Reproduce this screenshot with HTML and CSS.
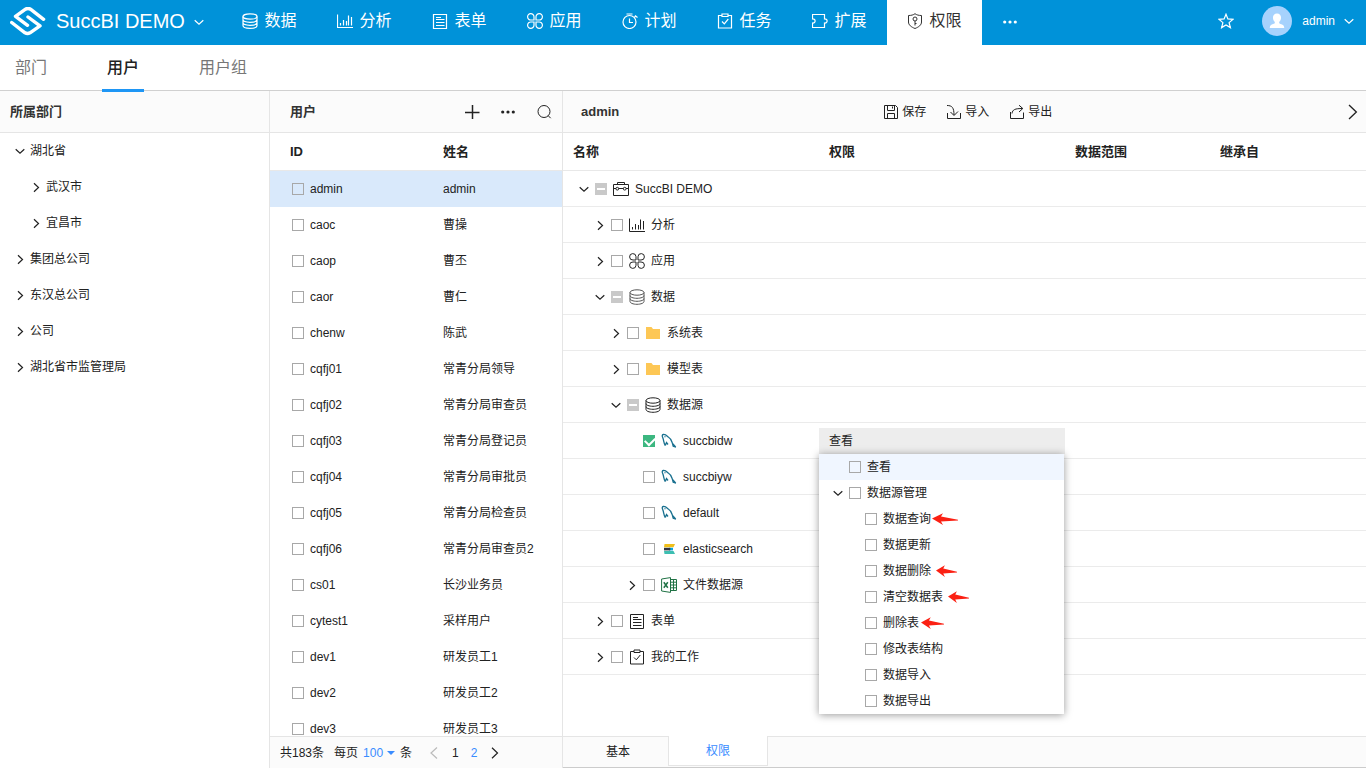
FILE: index.html
```html
<!DOCTYPE html>
<html lang="zh-CN">
<head>
<meta charset="utf-8">
<meta name="viewport" content="width=device-width, initial-scale=1">
<title>SuccBI DEMO</title>
<link rel="stylesheet" href="styles.css">
</head>
<body>
<svg class="sprite" aria-hidden="true">
  <symbol id="i-db" viewBox="0 0 16 16"><ellipse cx="8" cy="3.5" rx="7" ry="2.7"/><path d="M1 3.5v9c0 1.5 3 2.8 7 2.8s7-1.3 7-2.8v-9M1 6.6c0 1.5 3 2.7 7 2.7s7-1.2 7-2.7M1 9.6c0 1.5 3 2.7 7 2.7s7-1.2 7-2.7"/></symbol>
  <symbol id="i-chart" viewBox="0 0 16 16"><path d="M.5 1.500v13H16M3.500 12.500V10M6.500 12.500V7M9.500 12.500V8M11.500 12.500V2.500M14.500 12.500V4"/></symbol>
  <symbol id="i-form" viewBox="0 0 16 16"><path d="M1.500 1.500h13v14h-13zM4 4.500h5M4 6.500h8.500M4 9.500h8.500M4 12.500h8.500"/></symbol>
  <symbol id="i-app" viewBox="0 0 16 16"><path d="M7 7H4A3.200 3.200 0 1 1 7 3.700zM9 7H12A3.200 3.200 0 1 0 9 3.700zM7 9H4A3.200 3.200 0 1 0 7 12.300zM9 9H12A3.200 3.200 0 1 1 9 12.300z"/></symbol>
  <symbol id="i-plan" viewBox="0 0 16 16"><circle cx="7.500" cy="9" r="6.500"/><path d="M4.500 1h6M7.500 5.500v4H11M12.300 4.500l1.500-1.500M13 2.500l2.500 2"/></symbol>
  <symbol id="i-task" viewBox="0 0 16 16"><path d="M5 2.500H1.500v12.500h13V2.500H11M5 1h6v2.500H5zM5 8.500l2.300 2.300L11.300 6"/></symbol>
  <symbol id="i-ext" viewBox="0 0 16 16"><path d="M.5 6V1.500h12V6c3.500-.5 3.500 4.500 0 4v4.500H.5V10c3.500 .5 3.500-4.500 0-4z"/></symbol>
  <symbol id="i-shield" viewBox="0 0 16 16"><path d="M8 .7C6.500 2 4 2.500 1.500 2.500v6.500c0 3 2.700 5 6.500 6.500 3.800-1.500 6.500-3.500 6.500-6.500V2.500C12 2.500 9.500 2 8 .7z"/><circle cx="8" cy="6" r="2"/><path d="M8 8v4.500M8 10.500h1.500"/></symbol>
  <symbol id="i-down" viewBox="0 0 12 12"><path d="M1.700 4.200 6 8.200 10.300 4.200"/></symbol>
  <symbol id="i-right" viewBox="0 0 12 12"><path d="M4 2.200 8.500 6.500 4 10.800"/></symbol>
  <symbol id="i-left" viewBox="0 0 12 12"><path d="M9 .5 3 6l6 5.500"/></symbol>
  <symbol id="i-next" viewBox="0 0 12 12"><path d="M3 .8 8.500 6l-5.500 5.200"/></symbol>
  <symbol id="i-more" viewBox="0 0 16 16"><g fill="currentColor" stroke="none"><circle cx="2.700" cy="8" r="1.600"/><circle cx="8" cy="8" r="1.600"/><circle cx="13.300" cy="8" r="1.600"/></g></symbol>
  <symbol id="i-star" viewBox="0 0 16 16"><path d="m8 1.200 1.900 4.700 5.200.4-4 3.300 1.300 5L8 11.900l-4.400 2.700 1.300-5-4-3.300 5.200-.4z"/></symbol>
  <symbol id="i-plus" viewBox="0 0 16 16"><path d="M8.500 1v14M1 8.500h14.500"/></symbol>
  <symbol id="i-search" viewBox="0 0 16 16"><circle cx="8" cy="7.500" r="6"/><path d="m12.200 11.700 2.500 2.500"/></symbol>
  <symbol id="i-save" viewBox="0 0 16 16"><path d="M1.500 1.500h11l2 2v11h-13zM4.500 1.500v5h7v-5M4.500 14.500v-5h7v5M9.500 2.500v2"/></symbol>
  <symbol id="i-import" viewBox="0 0 16 16"><path d="M1 1.500c5 0 7 2 7 9.500M4.500 8 8 11.500 12 7.500M1.500 9v5.500h13V9"/></symbol>
  <symbol id="i-export" viewBox="0 0 16 16"><path d="M1.500 8v6.500h13V8.500M3 9.500c.5-4 3-5 10.500-5M10 1.200l3.800 3.300L10 8"/></symbol>
  <symbol id="i-case" viewBox="0 0 16 16"><path d="M.5 3.500h15v11H.5zM4.500 3.500v-2h7v2M.5 7.500h2.500M5.500 7.500h5M13 7.500h2.500"/><circle cx="4.300" cy="7.700" r="1.400"/><circle cx="11.700" cy="7.700" r="1.400"/></symbol>
  <symbol id="i-folder" viewBox="0 0 16 16"><path fill="#fdc755" stroke="none" d="M1 2h5.500l1.500 2h7v10H1z"/></symbol>
  <symbol id="i-mysql" viewBox="0 0 16 16"><g stroke="#19708f" stroke-width="1.300"><path d="M4.300 12.500C2.500 10 3 7.500 1.700 4.500 1 3 1 1.800 2.300 1.500c2-.3 3.500 1.200 5 2.500C10 5.500 10.500 8 11.500 10.500c1 1.200 2 1.700 3 3.300M4.300 12.500l1.200-3 1.500 2M11.500 10.500l.7 2.800 2.800.8"/><path d="M4 3.200v1"/></g></symbol>
  <symbol id="i-elastic" viewBox="0 0 16 16"><g stroke="none"><path fill="#f0bf1a" d="M3.500 3H14l-1.500 3.200H3z"/><path fill="#07a5de" d="M8 6.800h4v2.600H8z"/><path fill="#30323f" d="M3 6.800h6.300v2.600H3z"/><path fill="#3dbeb1" d="M3 10h9.500L14 13H3.500z"/></g></symbol>
  <symbol id="i-excel" viewBox="0 0 16 16"><g stroke="#207245"><path d="M.6 2 9.500.6v14.800L.6 14zM9.500 2.500h6v11h-6M12.500 2.500v11M9.500 5.200h6M9.500 8h6M9.500 10.800h6"/><path stroke-width="1.500" d="m2.800 5.200 4 5.600M6.800 5.200l-4 5.600"/></g></symbol>
  <symbol id="i-arrow" viewBox="0 0 26 12" preserveAspectRatio="none"><path fill="#fb2013" stroke="none" d="M0 5.500 11 .2 9 3.600 26 6.800v.8L9 8.400l2 3.500z"/></symbol>
</svg>

<header class="topbar">
  <button class="brand" type="button">
    <svg class="brand__logo" viewBox="0 0 36 29" aria-hidden="true"><path d="M33.600 12.300 20.500 2.200q-2.500-1.500-5 0L5.500 9.300 17.500 18.300M1.700 15.500 15 25.800q2.500 1.500 5 0L30 18.800 18 10"/></svg>
    <span class="brand__name">SuccBI DEMO</span>
    <svg class="icon icon--sm"><use href="#i-down"/></svg>
  </button>
  <nav class="nav">
    <a class="nav__item" href="#"><svg class="icon"><use href="#i-db"/></svg>数据</a>
    <a class="nav__item" href="#"><svg class="icon"><use href="#i-chart"/></svg>分析</a>
    <a class="nav__item" href="#"><svg class="icon"><use href="#i-form"/></svg>表单</a>
    <a class="nav__item" href="#"><svg class="icon"><use href="#i-app"/></svg>应用</a>
    <a class="nav__item" href="#"><svg class="icon"><use href="#i-plan"/></svg>计划</a>
    <a class="nav__item" href="#"><svg class="icon"><use href="#i-task"/></svg>任务</a>
    <a class="nav__item" href="#"><svg class="icon"><use href="#i-ext"/></svg>扩展</a>
    <a class="nav__item nav__item--active" href="#"><svg class="icon"><use href="#i-shield"/></svg>权限</a>
    <button class="nav__more" type="button" aria-label="更多"><svg class="icon"><use href="#i-more"/></svg></button>
  </nav>
  <div class="account">
    <button class="star" type="button" aria-label="收藏"><svg class="icon"><use href="#i-star"/></svg></button>
    <button class="account__user" type="button">
      <svg class="avatar" viewBox="0 0 30 30" aria-hidden="true"><circle cx="15" cy="15" r="15" fill="#a6d2fd"/><path fill="#fff" d="M15 7.500c2.800 0 4.300 2 4 4.700-.2 1.800-1 3-1.800 3.800v1.300c1 1 5 1 5 4.200v.5H7.800v-.5c0-3.200 4-3.200 5-4.200V16c-.8-.8-1.600-2-1.800-3.800-.3-2.700 1.200-4.700 4-4.700z"/></svg>
      <span>admin</span>
      <svg class="icon icon--sm"><use href="#i-down"/></svg>
    </button>
  </div>
</header>

<nav class="subtabs">
  <a class="subtabs__item" href="#">部门</a>
  <a class="subtabs__item subtabs__item--active" href="#">用户</a>
  <a class="subtabs__item" href="#">用户组</a>
</nav>

<main class="workspace">
  <section class="panel panel--dept">
    <h2 class="panel__head">所属部门</h2>
    <ul class="depts">
      <li class="depts__row"><svg class="icon icon--sm"><use href="#i-down"/></svg>湖北省</li>
      <li class="depts__row depts__row--child"><svg class="icon icon--sm"><use href="#i-right"/></svg>武汉市</li>
      <li class="depts__row depts__row--child"><svg class="icon icon--sm"><use href="#i-right"/></svg>宜昌市</li>
      <li class="depts__row"><svg class="icon icon--sm"><use href="#i-right"/></svg>集团总公司</li>
      <li class="depts__row"><svg class="icon icon--sm"><use href="#i-right"/></svg>东汉总公司</li>
      <li class="depts__row"><svg class="icon icon--sm"><use href="#i-right"/></svg>公司</li>
      <li class="depts__row"><svg class="icon icon--sm"><use href="#i-right"/></svg>湖北省市监管理局</li>
    </ul>
  </section>

  <section class="panel panel--users">
    <div class="panel__head">
      <h2 class="panel__title">用户</h2>
      <div class="tools">
        <button type="button" aria-label="新增"><svg class="icon icon--bold"><use href="#i-plus"/></svg></button>
        <button type="button" aria-label="更多"><svg class="icon"><use href="#i-more"/></svg></button>
        <button type="button" aria-label="搜索"><svg class="icon"><use href="#i-search"/></svg></button>
      </div>
    </div>
    <div class="panel__body">
      <table class="grid grid--users">
        <colgroup><col class="col-id"><col></colgroup>
        <thead><tr><th>ID</th><th>姓名</th></tr></thead>
        <tbody>
          <tr class="is-selected"><td><label class="pick"><input class="check" type="checkbox">admin</label></td><td>admin</td></tr>
          <tr><td><label class="pick"><input class="check" type="checkbox">caoc</label></td><td>曹操</td></tr>
          <tr><td><label class="pick"><input class="check" type="checkbox">caop</label></td><td>曹丕</td></tr>
          <tr><td><label class="pick"><input class="check" type="checkbox">caor</label></td><td>曹仁</td></tr>
          <tr><td><label class="pick"><input class="check" type="checkbox">chenw</label></td><td>陈武</td></tr>
          <tr><td><label class="pick"><input class="check" type="checkbox">cqfj01</label></td><td>常青分局领导</td></tr>
          <tr><td><label class="pick"><input class="check" type="checkbox">cqfj02</label></td><td>常青分局审查员</td></tr>
          <tr><td><label class="pick"><input class="check" type="checkbox">cqfj03</label></td><td>常青分局登记员</td></tr>
          <tr><td><label class="pick"><input class="check" type="checkbox">cqfj04</label></td><td>常青分局审批员</td></tr>
          <tr><td><label class="pick"><input class="check" type="checkbox">cqfj05</label></td><td>常青分局检查员</td></tr>
          <tr><td><label class="pick"><input class="check" type="checkbox">cqfj06</label></td><td>常青分局审查员2</td></tr>
          <tr><td><label class="pick"><input class="check" type="checkbox">cs01</label></td><td>长沙业务员</td></tr>
          <tr><td><label class="pick"><input class="check" type="checkbox">cytest1</label></td><td>采样用户</td></tr>
          <tr><td><label class="pick"><input class="check" type="checkbox">dev1</label></td><td>研发员工1</td></tr>
          <tr><td><label class="pick"><input class="check" type="checkbox">dev2</label></td><td>研发员工2</td></tr>
          <tr><td><label class="pick"><input class="check" type="checkbox">dev3</label></td><td>研发员工3</td></tr>
        </tbody>
      </table>
    </div>
    <footer class="pager">
      <span>共183条</span>
      <label class="pager__size">每页
        <span class="pager__select"><select><option>100</option></select><i class="caret"></i></span>
        条</label>
      <div class="pager__pages">
        <button class="is-disabled" type="button" aria-label="上一页"><svg class="icon icon--sm"><use href="#i-left"/></svg></button>
        <button type="button">1</button>
        <button class="is-link" type="button">2</button>
        <button type="button" aria-label="下一页"><svg class="icon icon--sm"><use href="#i-next"/></svg></button>
      </div>
    </footer>
  </section>

  <section class="panel panel--rights">
    <div class="panel__head">
      <h2 class="panel__title">admin</h2>
      <div class="actions">
        <button type="button"><svg class="icon"><use href="#i-save"/></svg>保存</button>
        <button type="button"><svg class="icon"><use href="#i-import"/></svg>导入</button>
        <button type="button"><svg class="icon"><use href="#i-export"/></svg>导出</button>
      </div>
      <button class="expand" type="button" aria-label="展开"><svg class="icon"><use href="#i-next"/></svg></button>
    </div>
    <div class="panel__body">
      <table class="grid grid--rights">
        <colgroup><col class="col-name"><col class="col-right"><col class="col-range"><col></colgroup>
        <thead><tr><th>名称</th><th>权限</th><th>数据范围</th><th>继承自</th></tr></thead>
        <tbody>
          <tr><td><div class="node"><svg class="icon icon--sm"><use href="#i-down"/></svg><label><input class="check check--partial" type="checkbox"><svg class="icon"><use href="#i-case"/></svg>SuccBI DEMO</label></div></td><td></td><td></td><td></td></tr>
          <tr><td><div class="node node--l1"><svg class="icon icon--sm"><use href="#i-right"/></svg><label><input class="check" type="checkbox"><svg class="icon"><use href="#i-chart"/></svg>分析</label></div></td><td></td><td></td><td></td></tr>
          <tr><td><div class="node node--l1"><svg class="icon icon--sm"><use href="#i-right"/></svg><label><input class="check" type="checkbox"><svg class="icon"><use href="#i-app"/></svg>应用</label></div></td><td></td><td></td><td></td></tr>
          <tr><td><div class="node node--l1"><svg class="icon icon--sm"><use href="#i-down"/></svg><label><input class="check check--partial" type="checkbox"><svg class="icon icon--soft"><use href="#i-db"/></svg>数据</label></div></td><td></td><td></td><td></td></tr>
          <tr><td><div class="node node--l2"><svg class="icon icon--sm"><use href="#i-right"/></svg><label><input class="check" type="checkbox"><svg class="icon"><use href="#i-folder"/></svg>系统表</label></div></td><td></td><td></td><td></td></tr>
          <tr><td><div class="node node--l2"><svg class="icon icon--sm"><use href="#i-right"/></svg><label><input class="check" type="checkbox"><svg class="icon"><use href="#i-folder"/></svg>模型表</label></div></td><td></td><td></td><td></td></tr>
          <tr><td><div class="node node--l2"><svg class="icon icon--sm"><use href="#i-down"/></svg><label><input class="check check--partial" type="checkbox"><svg class="icon"><use href="#i-db"/></svg>数据源</label></div></td><td></td><td></td><td></td></tr>
          <tr><td><div class="node node--l3 node--leaf"><label><input class="check" type="checkbox" checked><svg class="icon"><use href="#i-mysql"/></svg>succbidw</label></div></td>
            <td class="cell-combo">
              <div class="combo">
                <button class="combo__value" type="button" aria-haspopup="true" aria-expanded="true">查看</button>
                <ul class="menu">
                  <li class="menu__item is-hover"><label><input class="check" type="checkbox">查看</label></li>
                  <li class="menu__item menu__item--open"><svg class="icon icon--sm"><use href="#i-down"/></svg><label><input class="check" type="checkbox">数据源管理</label></li>
                  <li class="menu__item menu__item--child"><label><input class="check" type="checkbox">数据查询</label><svg class="mark mark--long"><use href="#i-arrow"/></svg></li>
                  <li class="menu__item menu__item--child"><label><input class="check" type="checkbox">数据更新</label></li>
                  <li class="menu__item menu__item--child"><label><input class="check" type="checkbox">数据删除</label><svg class="mark mark--apart"><use href="#i-arrow"/></svg></li>
                  <li class="menu__item menu__item--child"><label><input class="check" type="checkbox">清空数据表</label><svg class="mark mark--apart"><use href="#i-arrow"/></svg></li>
                  <li class="menu__item menu__item--child"><label><input class="check" type="checkbox">删除表</label><svg class="mark"><use href="#i-arrow"/></svg></li>
                  <li class="menu__item menu__item--child"><label><input class="check" type="checkbox">修改表结构</label></li>
                  <li class="menu__item menu__item--child"><label><input class="check" type="checkbox">数据导入</label></li>
                  <li class="menu__item menu__item--child"><label><input class="check" type="checkbox">数据导出</label></li>
                </ul>
              </div>
            </td><td></td><td></td></tr>
          <tr><td><div class="node node--l3 node--leaf"><label><input class="check" type="checkbox"><svg class="icon"><use href="#i-mysql"/></svg>succbiyw</label></div></td><td></td><td></td><td></td></tr>
          <tr><td><div class="node node--l3 node--leaf"><label><input class="check" type="checkbox"><svg class="icon"><use href="#i-mysql"/></svg>default</label></div></td><td></td><td></td><td></td></tr>
          <tr><td><div class="node node--l3 node--leaf"><label><input class="check" type="checkbox"><svg class="icon"><use href="#i-elastic"/></svg>elasticsearch</label></div></td><td></td><td></td><td></td></tr>
          <tr><td><div class="node node--l3"><svg class="icon icon--sm"><use href="#i-right"/></svg><label><input class="check" type="checkbox"><svg class="icon"><use href="#i-excel"/></svg>文件数据源</label></div></td><td></td><td></td><td></td></tr>
          <tr><td><div class="node node--l1"><svg class="icon icon--sm"><use href="#i-right"/></svg><label><input class="check" type="checkbox"><svg class="icon"><use href="#i-form"/></svg>表单</label></div></td><td></td><td></td><td></td></tr>
          <tr><td><div class="node node--l1"><svg class="icon icon--sm"><use href="#i-right"/></svg><label><input class="check" type="checkbox"><svg class="icon"><use href="#i-task"/></svg>我的工作</label></div></td><td></td><td></td><td></td></tr>
        </tbody>
      </table>
    </div>
    <div class="sheets">
      <button class="sheets__tab" type="button">基本</button>
      <button class="sheets__tab sheets__tab--active" type="button">权限</button>
      <div class="sheets__rest"></div>
    </div>
  </section>
</main>
</body>
</html>
```
FILE: styles.css
```css
* { box-sizing: border-box; }

body {
  margin: 0;
  height: 100vh;
  display: flex;
  flex-direction: column;
  overflow: hidden;
  background: #fff;
  color: #222;
  font: 12px/16px "Liberation Sans", "Noto Sans CJK SC", sans-serif;
}

button, select {
  margin: 0;
  padding: 0;
  border: 0;
  background: none;
  color: inherit;
  font: inherit;
}

a { color: inherit; text-decoration: none; }
ul { margin: 0; padding: 0; list-style: none; }
h2 { margin: 0; font-size: 13px; font-weight: 600; }

.sprite { position: absolute; width: 0; height: 0; }

.icon {
  flex: none;
  width: 16px;
  height: 16px;
  fill: none;
  stroke: currentColor;
  stroke-width: 1;
}
.icon--sm { width: 12px; height: 12px; stroke-width: 1.2; }
.icon--bold { stroke-width: 1.5; }
.icon--soft { color: #555; }

/* Top bar */
.topbar {
  flex: none;
  display: flex;
  height: 45px;
  background: #0092d9;
  color: #fff;
}
.brand {
  display: flex;
  align-items: center;
  width: 222px;
  padding: 0 0 2px 10px;
  font-size: 20px;
  line-height: 24px;
}
.brand__logo {
  width: 36px;
  height: 29px;
  margin-right: 10px;
  fill: none;
  stroke: #fff;
  stroke-width: 3.4;
  stroke-linecap: round;
  stroke-linejoin: round;
}
.brand__name { padding-bottom: 2px; }
.brand .icon { margin-left: 8px; }
.nav { display: flex; }
.nav__item {
  display: flex;
  align-items: center;
  justify-content: center;
  gap: 6px;
  width: 95px;
  padding-bottom: 4px;
  font-size: 16px;
  line-height: 20px;
}
.nav__item .icon { stroke-width: 1.2; }
.nav__item--active { background: #fff; color: #333; }
.nav__item--active .icon { stroke-width: 1; }
.nav__more { width: 56px; padding-top: 2px; }
.account {
  display: flex;
  align-items: center;
  margin-left: auto;
  padding: 0 11px 4px 0;
}
.star { height: 16px; margin-right: 28px; }
.star .icon { stroke-width: 1.2; }
.account__user { display: flex; align-items: center; }
.avatar { width: 30px; height: 30px; margin-right: 10px; }
.account__user .icon { margin-left: 8px; }

/* Section tabs */
.subtabs {
  position: relative;
  flex: none;
  display: flex;
  gap: 50px;
  height: 46px;
  padding-left: 10px;
  border-bottom: 1px solid #d0d0d0;
  color: #777;
  font-size: 16px;
}
.subtabs__item {
  height: 47px;
  padding: 0 5px;
  line-height: 46px;
}
.subtabs__item--active {
  border-bottom: 3px solid #1e96f5;
  color: #222;
  font-weight: 500;
}

/* Panels */
.workspace { flex: 1; display: flex; min-height: 0; }
.panel { display: flex; flex-direction: column; min-width: 0; }
.panel--dept { flex: none; width: 270px; border-right: 1px solid #e5e5e5; }
.panel--users { flex: none; width: 293px; border-right: 1px solid #e5e5e5; }
.panel--rights { flex: 1; }
.panel__head {
  flex: none;
  display: flex;
  align-items: center;
  height: 42px;
  border-bottom: 1px solid #e5e5e5;
  background: #fbfbfb;
  color: #333;
}
.panel--dept .panel__head { padding-left: 10px; }
.panel--users .panel__head { padding: 0 10px 0 20px; }
.panel--rights .panel__head { padding: 0 5px 0 18px; }
.panel__body { flex: 1; min-height: 0; overflow: hidden; }

.depts__row {
  display: flex;
  align-items: center;
  gap: 4px;
  height: 36px;
  padding-left: 14px;
}
.depts__row--child { padding-left: 30px; }

.tools { display: flex; gap: 20px; margin-left: auto; color: #222; }
.tools button { height: 16px; }

.actions { display: flex; gap: 20px; margin-left: 264px; color: #222; }
.actions button { display: flex; align-items: center; gap: 3px; }
.expand { height: 16px; margin-left: auto; color: #222; }

/* Tables */
.grid {
  width: 100%;
  table-layout: fixed;
  border-collapse: separate;
  border-spacing: 0;
}
.grid th {
  height: 38px;
  padding: 0 0 0 10px;
  border-bottom: 1px solid #e8e8e8;
  font-size: 13px;
  font-weight: 600;
  text-align: left;
}
.grid td { height: 36px; padding: 0 0 0 10px; }
.grid--users th:first-child { padding-left: 20px; }
.grid--users td:first-child { padding-left: 22px; }
.grid--rights td { border-bottom: 1px solid #ebebeb; }
.grid--rights td:first-child { padding-left: 15px; }
.col-id { width: 163px; }
.col-name { width: 256px; }
.col-right { width: 246px; }
.col-range { width: 145px; }
.is-selected td { background: #d9e9fb; }

.pick { display: flex; align-items: center; gap: 6px; }

.check {
  flex: none;
  appearance: none;
  width: 12px;
  height: 12px;
  margin: 0;
  border: 1px solid #a8a8a8;
}
.check:checked {
  position: relative;
  border-color: #3cb780;
  background: #3cb780;
}
.check:checked::after {
  content: "";
  position: absolute;
  left: 1px;
  top: 1px;
  width: 8px;
  height: 5px;
  border: solid #fff;
  border-width: 0 0 2px 2px;
  transform: rotate(-45deg);
}
.check--partial {
  border: 5px solid #c9c9c9;
  border-width: 5px 2px;
  background: #fff;
}

.node { display: flex; align-items: center; gap: 5px; }
.node label { display: flex; align-items: center; gap: 6px; }
.node--l1 { padding-left: 16px; }
.node--l2 { padding-left: 32px; }
.node--l3 { padding-left: 48px; }
.node--leaf { padding-left: 65px; }

/* Permission drop-down */
.grid--rights .cell-combo { padding: 0; }
.combo { position: relative; }
.combo__value {
  display: block;
  width: 100%;
  height: 26px;
  padding-left: 10px;
  background: #ededed;
  text-align: left;
}
.menu {
  position: absolute;
  z-index: 2;
  top: 100%;
  left: 0;
  right: 1px;
  background: #fff;
  box-shadow: 0 1px 8px rgba(0, 0, 0, .4);
}
.menu__item {
  display: flex;
  align-items: center;
  height: 26px;
  padding-left: 30px;
}
.menu__item label { display: flex; align-items: center; gap: 6px; }
.menu__item--open { gap: 5px; padding-left: 13px; }
.menu__item--child { padding-left: 46px; }
.menu__item.is-hover { background: #f0f6ff; }
.mark { width: 23px; height: 12px; margin-left: 2px; }
.mark--long { width: 26px; margin-left: 1px; }
.mark--apart { width: 21px; margin-left: 5px; }

/* Pager */
.pager {
  flex: none;
  display: flex;
  align-items: center;
  height: 32px;
  padding-left: 10px;
  border-top: 1px solid #e5e5e5;
  background: #fbfbfb;
}
.pager__size { display: flex; gap: 5px; margin-left: 10px; }
.pager__select { display: flex; align-items: center; gap: 3px; color: #3a8cff; }
.pager__select select { appearance: none; width: 21px; }
.caret { border: 4px solid transparent; border-top-color: #3a8cff; border-bottom: 0; }
.pager__pages { display: flex; gap: 12px; margin-left: 16px; }
.pager__pages button { display: flex; align-items: center; }
.is-disabled { color: #bbb; }
.is-link { color: #3a8cff; }

/* Bottom sheet tabs */
.sheets {
  flex: none;
  display: flex;
  height: 32px;
  border-bottom: 1px solid #ccc;
  background: #fbfbfb;
}
.sheets__tab {
  width: 105px;
  padding: 0 0 1px 5px;
  border-top: 1px solid #e5e5e5;
}
.sheets__tab--active {
  width: 100px;
  height: 30px;
  padding: 0;
  border: 1px solid #e5e5e5;
  border-top: 0;
  background: #fff;
  color: #3a8cff;
}
.sheets__rest { flex: 1; border-top: 1px solid #e5e5e5; }
```
